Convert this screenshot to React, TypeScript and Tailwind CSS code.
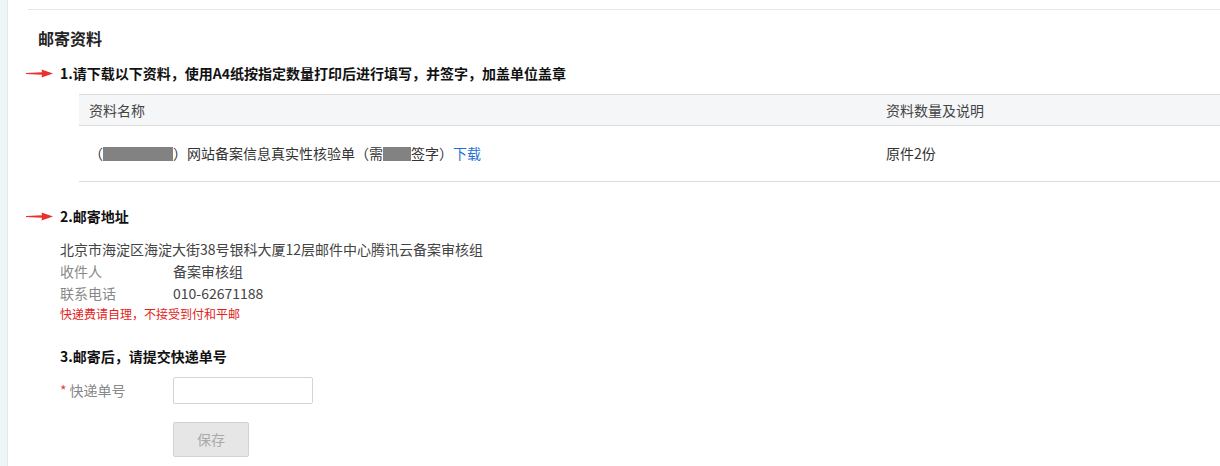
import React from 'react';

const font = { fontFamily: '"Noto Sans CJK SC", "Noto Sans", sans-serif' };

function RedArrow() {
  return (
    <svg width="27" height="9" viewBox="0 0 27 9" className="block">
      <path d="M0 4 L16 3.2 L15.5 0.6 L27 4.5 L15.5 8.4 L16 5.8 L0 5 Z" fill="#e8312f" />
    </svg>
  );
}

function StepTitle({ children, arrow }: { children: React.ReactNode; arrow?: boolean }) {
  return (
    <div className="flex items-center h-[20px]">
      <div className="w-[52px] pl-[18px] flex items-center">{arrow && <RedArrow />}</div>
      <div className="text-[14px] leading-[20px] font-bold text-[#111]">{children}</div>
    </div>
  );
}

function Redacted({ w }: { w: string }) {
  return <span className={`inline-block h-[14px] align-[-2px] bg-[#828282] ${w}`} />;
}

export default function App() {
  return (
    <div className="flex w-full h-[466px] bg-white overflow-hidden text-[#333]" style={font}>
      <div className="w-[8px] shrink-0 bg-[#eef5f5] border-r border-[#dfe8ea]" />
      <div className="flex-1 min-w-0">
        <div className="mt-[9px] ml-[20px] h-px bg-[#e6e6e6]" />

        <h2 className="mt-[16px] pl-[30px] h-[24px] text-[16px] leading-[24px] font-bold text-[#222]">邮寄资料</h2>

        <div className="mt-[13px]">
          <StepTitle arrow>1.请下载以下资料，使用A4纸按指定数量打印后进行填写，并签字，加盖单位盖章</StepTitle>
        </div>

        <div className="mt-[11px] ml-[71px]">
          <div className="flex h-[32px] items-center bg-[#f5f6f7] border-t border-b border-[#dcdcdc] text-[14px] text-[#444]">
            <div className="w-[797px] pl-[10px]">资料名称</div>
            <div className="flex-1 pl-[10px]">资料数量及说明</div>
          </div>
          <div className="flex h-[56px] items-center border-b border-[#dcdcdc] text-[14px] text-[#333]">
            <div className="w-[797px] pl-[10px] whitespace-nowrap">
              （<Redacted w="w-[70px]" />）网站备案信息真实性核验单（需<Redacted w="w-[28px]" />签字）
              <a className="text-[#1f6fd6] cursor-pointer">下载</a>
            </div>
            <div className="flex-1 pl-[10px]">原件2份</div>
          </div>
        </div>

        <div className="mt-[24px]">
          <StepTitle arrow>2.邮寄地址</StepTitle>
        </div>

        <div className="mt-[12px] pl-[52px] text-[14px] leading-[22px]">
          <div className="text-[#444]">北京市海淀区海淀大街38号银科大厦12层邮件中心腾讯云备案审核组</div>
          <div className="flex">
            <span className="w-[113px] text-[#888]">收件人</span>
            <span className="text-[#444]">备案审核组</span>
          </div>
          <div className="flex">
            <span className="w-[113px] text-[#888]">联系电话</span>
            <span className="text-[#444]">010-62671188</span>
          </div>
          <div className="text-[12px] leading-[20px] text-[#e2231a]">快递费请自理，不接受到付和平邮</div>
        </div>

        <div className="mt-[22px]">
          <StepTitle>3.邮寄后，请提交快递单号</StepTitle>
        </div>

        <div className="mt-[11px] pl-[52px] flex items-center">
          <label className="w-[113px] text-[14px] text-[#888]">
            <span className="text-[#e54545] mr-[3px]">*</span>快递单号
          </label>
          <input className="w-[140px] h-[27px] border border-[#d4d4d4] rounded-[2px] outline-none px-2 text-[14px]" />
        </div>

        <div className="mt-[18px] pl-[165px]">
          <button className="w-[76px] h-[35px] bg-[#e6e6e6] border border-[#d2d2d2] rounded-[2px] text-[14px] text-[#aaa]">
            保存
          </button>
        </div>
      </div>
    </div>
  );
}
